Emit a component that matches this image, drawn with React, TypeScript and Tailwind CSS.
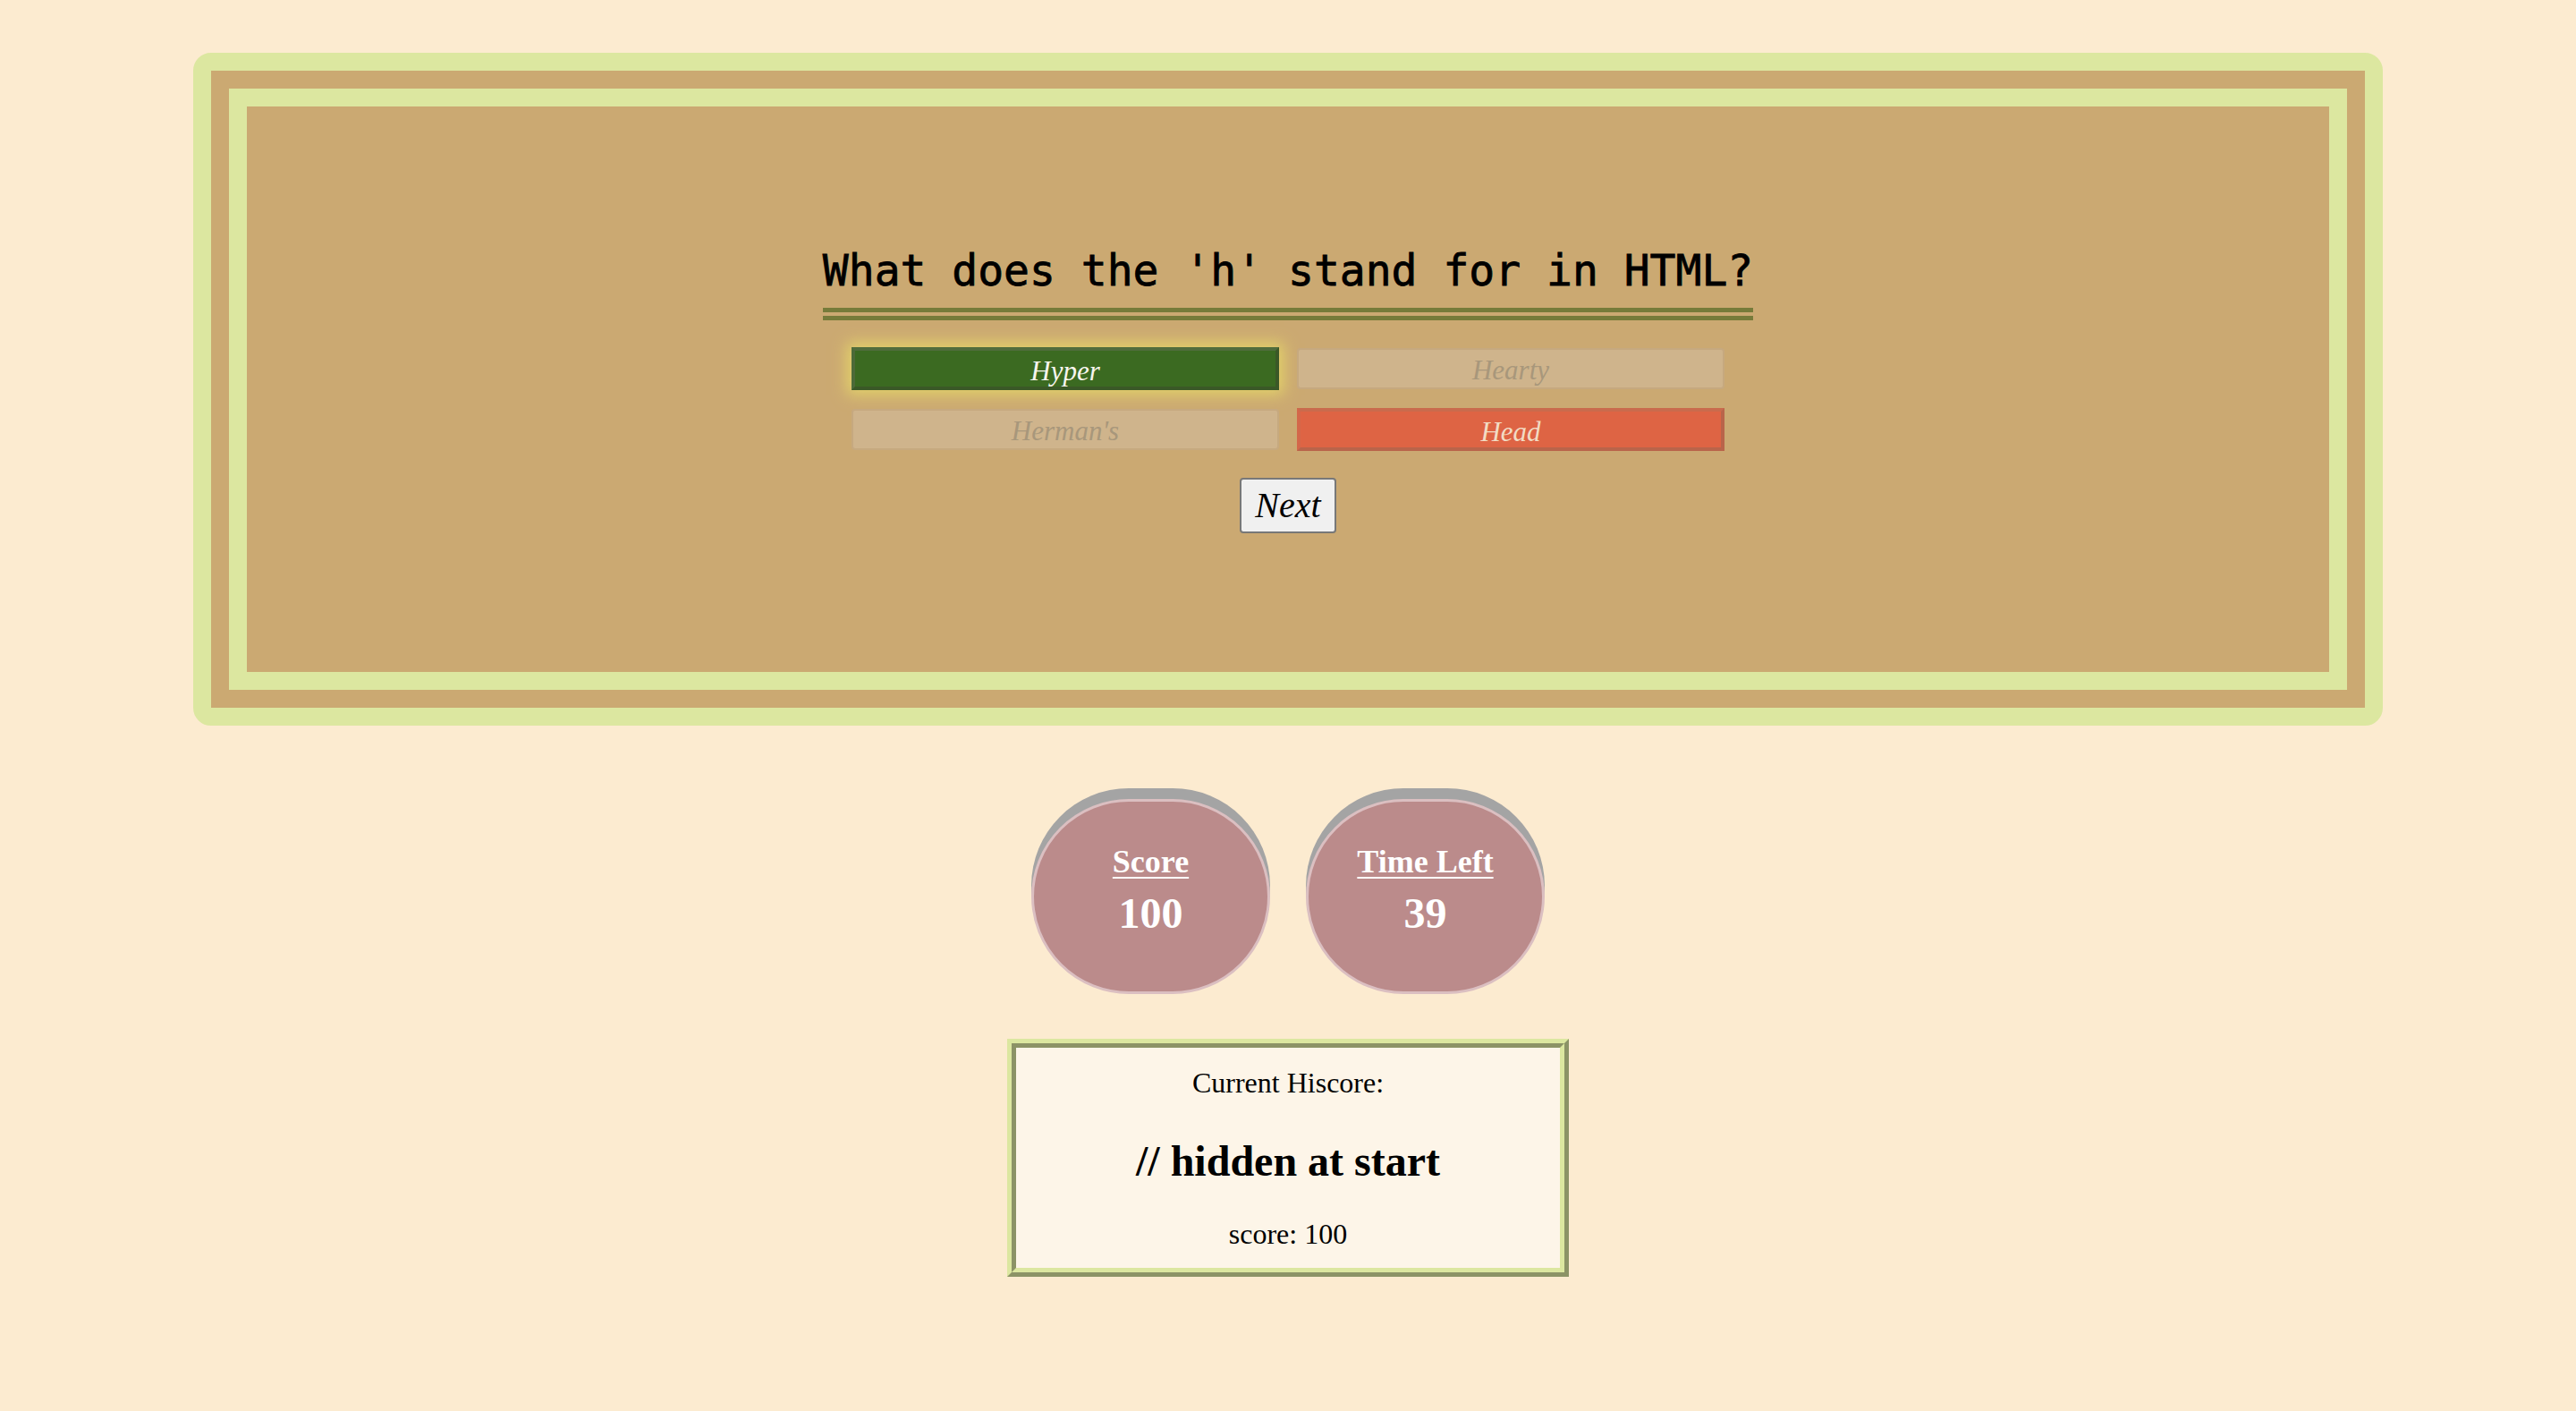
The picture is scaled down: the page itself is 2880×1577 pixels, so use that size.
import React from "react";

const answers = [
  { label: "Hyper", state: "correct" },
  { label: "Hearty", state: "off" },
  { label: "Herman's", state: "off" },
  { label: "Head", state: "wrong" },
];

const AnswerButton = ({ label, state }: { label: string; state: string }) => {
  if (state === "correct") {
    return (
      <button className="h-[48px] w-full border-[4px] border-t-[#506c3c] border-l-[#4c6a38] border-r-[#3a5827] border-b-[#3a5827] bg-[#3b6a21] text-[31px] italic text-[#f7f5ee] shadow-[0_0_16px_5px_#e3d26a] [font-family:'Liberation_Serif',serif]">
        {label}
      </button>
    );
  }
  if (state === "wrong") {
    return (
      <button className="h-[48px] w-full border-[4px] border-t-[#c96b4d] border-l-[#d4674a] border-r-[#b9644a] border-b-[#b9644a] bg-[#de6444] text-[31px] italic text-[#f2dcc4] [font-family:'Liberation_Serif',serif]">
        {label}
      </button>
    );
  }
  return (
    <button
      disabled
      className="my-[1px] h-[46px] w-full rounded-[4px] border-2 border-[#c6a97f] bg-[#cfb48c] text-[31px] italic text-[#a8977b] [font-family:'Liberation_Serif',serif]"
    >
      {label}
    </button>
  );
};

const Bubble = ({ title, value }: { title: string; value: string }) => (
  <div className="flex h-[218px] w-[267px] flex-col items-center rounded-full border-[3px] border-[#dbbfc1] bg-[#bb8b8b] pt-[47px] text-white shadow-[0_-12px_0_#a4a4a4]">
    <h3 className="text-[36px] leading-[41px] font-bold underline decoration-2 underline-offset-[5px]">{title}</h3>
    <div className="mt-[9px] text-[48px] leading-[55px] font-bold">{value}</div>
  </div>
);

export default function App() {
  return (
    <div className="min-h-screen bg-[#fcebd0] pt-[59px] pb-[150px] text-black [font-family:'Liberation_Serif',serif]">
      <div className="mx-auto w-[2448px] rounded-[20px] border-[20px] border-[#dce7a0] bg-[#cba972] p-[20px]">
        <div className="flex h-[672px] flex-col items-center justify-center border-[20px] border-[#dce7a0] bg-[#cba972]">
          <h2 className="border-b-[14px] border-double border-[#767b3a] pb-[14px] text-[48px] leading-[56px] font-normal text-black [-webkit-text-stroke:0.8px_black] [font-family:'DejaVu_Sans_Mono',monospace]">
            What does the 'h' stand for in HTML?
          </h2>
          <div className="mt-[30px] grid w-[976px] grid-cols-2 gap-[20px]">
            {answers.map((a) => (
              <AnswerButton key={a.label} label={a.label} state={a.state} />
            ))}
          </div>
          <button className="mt-[30px] rounded-[4px] border-2 border-[#787878] bg-[#f0f0f0] px-[15px] py-[6px] text-[40px] leading-[46px] italic text-black">
            Next
          </button>
        </div>
      </div>

      <div className="mt-[82px] flex justify-center gap-[40px]">
        <Bubble title="Score" value="100" />
        <Bubble title="Time Left" value="39" />
      </div>

      <div className="mx-auto mt-[50px] w-[628px] border-[10px] border-[#dce7a0] bg-[#fdf5e8] pt-[21px] pb-[19px] text-center [border-style:ridge]">
        <p className="text-[32px] leading-[37px]">Current Hiscore:</p>
        <h2 className="mt-[41px] text-[48px] leading-[55px] font-bold">// hidden at start</h2>
        <p className="mt-[36px] text-[32px] leading-[37px]">score: 100</p>
      </div>
    </div>
  );
}
